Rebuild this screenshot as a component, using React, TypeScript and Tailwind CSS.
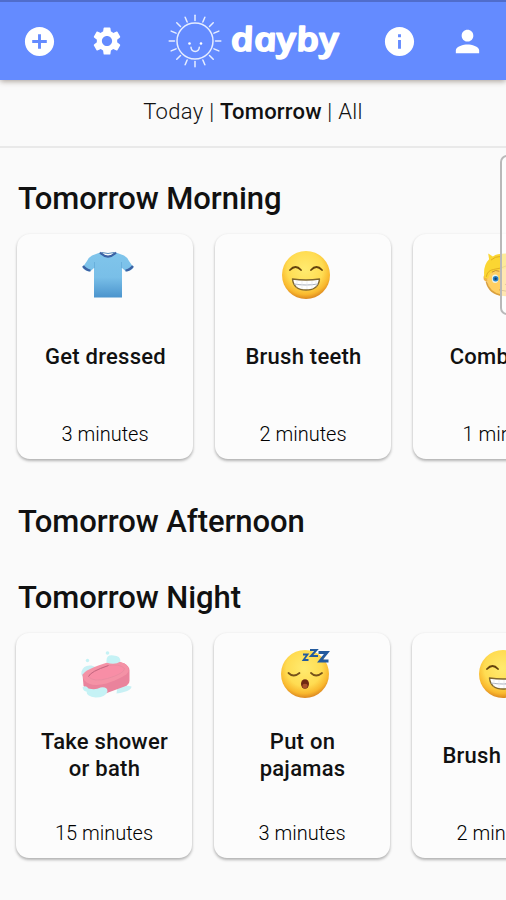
import { ReactNode } from 'react';
import { MdAddCircle, MdInfo, MdPerson, MdSettings } from 'react-icons/md';

interface Task {
  name: string;
  duration: string;
  icon: ReactNode;
}

function Sun() {
  const rays = Array.from({ length: 16 }, (_, i) => i * 22.5);

  return (
    <svg className="h-[54px] w-[54px] shrink-0" viewBox="-27 -27 54 54" fill="none" stroke="#e6edff" strokeWidth="1.5" strokeLinecap="round">
      <circle r="18" />
      {rays.map((angle) => (
        <path key={angle} d="M0-20.5V-25.8" transform={`rotate(${angle})`} />
      ))}
      <circle cx="-5.5" cy="2.5" r="1.3" fill="#fff" stroke="none" />
      <circle cx="6" cy="2.5" r="1.3" fill="#fff" stroke="none" />
      <path d="M-4 6.3c.3 5.5 8 5.5 8.3 0" />
    </svg>
  );
}

// The italic cut has the single-storey "a", so it is set upright again with a skew
function Wordmark() {
  return (
    <svg className="h-[54px] w-[120px] shrink-0" viewBox="0 0 120 54">
      <text
        transform="translate(10.5 37) skewX(12)"
        textLength="108"
        lengthAdjust="spacingAndGlyphs"
        fontFamily="'Open Sans', sans-serif"
        fontStyle="italic"
        fontWeight="600"
        fontSize="33"
        fill="#fff"
        stroke="#fff"
        strokeWidth="1.5"
        strokeLinejoin="round"
      >
        dayby
      </text>
    </svg>
  );
}

function Shirt() {
  return (
    <svg className="h-[54px] w-[54px]" viewBox="0 0 54 54">
      <defs>
        <linearGradient id="shirt" x1="0" y1="0" x2="0" y2="1">
          <stop offset="0" stopColor="#80c5eb" />
          <stop offset=".55" stopColor="#79bfe8" />
          <stop offset="1" stopColor="#4b94cd" />
        </linearGradient>
      </defs>
      <path d="M19 4.5 11 7.5Q8 9 6 13L1.5 19.5Q4 23 9 23.5L13 20V49.5H41V20l4 3.5q5-.5 7.5-4L48 13Q46 9 43 7.5L35 4.5Q27 12 19 4.5Z" fill="url(#shirt)" />
      <path d="M19 4.5q8 8 16 0M2 18q3 4 7.5 4.5M52 18q-3 4-7.5 4.5" fill="none" stroke="#3b62a4" strokeWidth="2.2" />
      <path d="M21 4.5q6 2 12 0" fill="none" stroke="#5b8dbb" />
      <path d="M13.5 14v6M40.5 14v6" stroke="#65abd8" strokeWidth=".8" />
    </svg>
  );
}

function FaceGradient({ id }: { id: string }) {
  return (
    <defs>
      <radialGradient id={id} cx=".48" cy=".38" r=".64">
        <stop offset="0" stopColor="#ffeb70" />
        <stop offset=".58" stopColor="#ffdc52" />
        <stop offset=".82" stopColor="#f9b82e" />
        <stop offset="1" stopColor="#d57d1d" />
      </radialGradient>
    </defs>
  );
}

function Grin({ id }: { id: string }) {
  return (
    <svg className="h-[54px] w-[54px]" viewBox="0 0 54 54">
      <FaceGradient id={id} />
      <circle cx="27" cy="27" r="24" fill={`url(#${id})`} />
      <path d="M11 22q5.5-6 11 0M32 22q5.5-6 11 0" fill="none" stroke="#65430c" strokeWidth="1.8" strokeLinecap="round" />
      <path d="M13.5 31q13.5 2 27 0-1 11-13.5 11-12.5 0-13.5-11Z" fill="#fff" stroke="#80672e" strokeWidth="1.4" strokeLinejoin="round" />
      <path d="M15 36q12 2 24 0" fill="none" stroke="#a9b0bd" strokeWidth="1.2" />
      <path d="M18 32.5v7M23 33v8M28 33v8M33 33v8M37 32.5v6" stroke="#e5e6ea" strokeWidth=".7" />
    </svg>
  );
}

function Sleepy() {
  return (
    <svg className="h-[54px] w-[54px] overflow-visible" viewBox="0 0 54 54">
      <FaceGradient id="sleepy" />
      <circle cx="27" cy="27" r="24" fill="url(#sleepy)" />
      <path d="M10.5 26q5 5 11 0M33 26q5 5 11 0" fill="none" stroke="#76521a" strokeWidth="1.8" strokeLinecap="round" />
      <ellipse cx="27" cy="37" rx="4" ry="4.8" fill="#6f2912" />
      <ellipse cx="27" cy="39" rx="2.6" ry="2.3" fill="#a9522a" />
      <g fill="none" stroke="#245b9e" strokeWidth="2.4">
        <path d="M25 7.5h4.5l-4 5.5h5" strokeWidth="1.8" />
        <path d="M32 3h6.5l-5.500 6h7" strokeWidth="2" />
        <path d="M40.5 5.500h8.500L42 14h8.500" strokeWidth="2.8" />
      </g>
    </svg>
  );
}

function Soap() {
  return (
    <svg className="h-[54px] w-[54px]" viewBox="0.5 -4.5 54 54">
      <path d="M2 20q2-7 10-6l5 2-14 9q-2-2-1-5ZM38 35q7-2 14 0 0 5-15 7Z" fill="#c8f0f4" />
      <path d="M3 23 31 10q7-1 14 2 5 3 5 7v10q0 4-5 6L26 42Q6 41 4 34Z" fill="#ea839c" />
      <path d="M3.5 23Q5 18 31 10q7-1 14 2 5 3 4 8-2 5-22 12-16 4-22-3-2-3-1.5-6Z" fill="#f492a6" />
      <path d="M9 25q2-5 20-11 11-2 16 3 0 5-17 10-14 4-19-2Z" fill="#f88ea6" stroke="#e78ba1" strokeWidth=".8" />
      <path d="M9 25q2-5 20-11" fill="none" stroke="#c5657f" strokeWidth="1" />
      <path d="M27 9q0-6 7-5 7 0 7 6-6 4-14 1ZM3 36q3-3 6 1 7 2 12-1 7-1 7 4-2 6-12 6-9-1-9-6-3 0-4-4Z" fill="#c5f2f5" />
      <circle cx="8" cy="9" r="1.7" fill="#c5f2f5" />
      <circle cx="28" cy="1.5" r="1.8" fill="#c5f2f5" />
    </svg>
  );
}

function Child() {
  return (
    <svg className="h-[54px] w-[54px]" viewBox="-5 -3 58 58">
      <circle cx="6" cy="29" r="4" fill="#efb348" />
      <path d="M6 20q21-8 42 0v13q-2 16-21 16Q8 48 6 33Z" fill="#ffcf62" />
      <path d="M3 29Q1 16 8 9l-1-6 5 3q3-3 15-3 17 0 22 12 3 6 2 14l-4-9q-13-5-33 2-6 1-7 8Z" fill="#fbd632" />
      <path d="M5 28q1-7 8-8 8-1 14-4M10 10q4-4 11-4" fill="none" stroke="#dfaa22" />
      <ellipse cx="14.5" cy="30" rx="3.5" ry="4.500" fill="#e7f3ee" />
      <circle cx="15" cy="30" r="3" fill="#2580c5" />
      <circle cx="15" cy="30" r="1.3" fill="#153b70" />
      <ellipse cx="39" cy="30" rx="3" ry="4" fill="#2580c5" />
      <path d="M11 23q4-3 8-1M19 42q8 3 16 0M25 36q3 1 6 0" fill="none" stroke="#c18a35" />
      <path d="M5 33q3 13 17 15" fill="none" stroke="#daa03e" strokeWidth="1.5" />
    </svg>
  );
}

const morning: Task[] = [
  { name: 'Get dressed', duration: '3 minutes', icon: <Shirt /> },
  { name: 'Brush teeth', duration: '2 minutes', icon: <Grin id="grinMorning" /> },
  { name: 'Comb hair', duration: '1 minute', icon: <Child /> },
];

const night: Task[] = [
  { name: 'Take shower or bath', duration: '15 minutes', icon: <Soap /> },
  { name: 'Put on pajamas', duration: '3 minutes', icon: <Sleepy /> },
  { name: 'Brush teeth', duration: '2 minutes', icon: <Grin id="grinNight" /> },
];

function TaskCard({ name, duration, icon }: Task) {
  return (
    <div className="flex h-[225px] w-[176px] shrink-0 flex-col items-center rounded-[13px] bg-[#fcfcfc] pt-[14px] shadow-[0_2px_3px_rgba(0,0,0,0.28),0_0_3px_rgba(0,0,0,0.05)]">
      <div className="pl-[5px]">{icon}</div>
      <div className="mt-[24px] flex h-[60px] w-[146px] items-center justify-center pl-px text-center text-[22px] leading-[27px] font-medium tracking-[0.25px]">
        {name}
      </div>
      <p className="mt-[36px] text-[20px] leading-[24px] font-light text-black">{duration}</p>
    </div>
  );
}

function TaskRow({ tasks }: { tasks: Task[] }) {
  return (
    <div className="flex gap-[22px]">
      {tasks.map((task) => (
        <TaskCard key={task.name} {...task} />
      ))}
    </div>
  );
}

export default function App() {
  return (
    <div className="relative h-[900px] w-[506px] overflow-hidden bg-[#fafafa] font-['Roboto',sans-serif] text-[#111]">
      <header className="flex h-[80px] items-center border-t-2 border-[#506dcb] bg-[#648bff] pl-[22px] text-white shadow-[0_1px_6px_rgba(70,50,35,0.5)]">
        <MdAddCircle className="size-[35px] shrink-0" />
        <MdSettings className="ml-[33px] size-[34px] shrink-0" />
        <div className="ml-[44px] flex items-center">
          <Sun />
          <Wordmark />
        </div>
        <MdInfo className="ml-[40px] size-[35px] shrink-0" />
        <MdPerson className="ml-[33px] size-[35px] shrink-0" />
      </header>

      <nav className="flex h-[68px] justify-center border-b-2 border-[#e9e9e9] pt-[19px] text-[22px] leading-[26px] tracking-[0.3px] whitespace-pre">
        <span className="font-light">Today | </span>
        <span className="font-medium tracking-[0.2px]">Tomorrow</span>
        <span className="font-light"> | All</span>
      </nav>

      <main>
        <h2 className="mt-[33px] ml-[18px] text-[31px] leading-[36px] font-medium tracking-[-0.06px]">Tomorrow Morning</h2>
        <div className="mt-[17px] ml-[17px]">
          <TaskRow tasks={morning} />
        </div>
        <h2 className="mt-[45px] ml-[18px] text-[31px] leading-[36px] font-medium tracking-[-0.06px]">Tomorrow Afternoon</h2>
        <h2 className="mt-[40px] ml-[18px] text-[31px] leading-[36px] font-medium tracking-[-0.06px]">Tomorrow Night</h2>
        <div className="mt-[17px] ml-[16px]">
          <TaskRow tasks={night} />
        </div>
      </main>

      {/* scroll handle over the right edge */}
      <div className="absolute top-[155px] left-[500px] h-[160px] w-[20px] rounded-[7px] border-2 border-[#b9b9b9] bg-white/50" />
    </div>
  );
}
